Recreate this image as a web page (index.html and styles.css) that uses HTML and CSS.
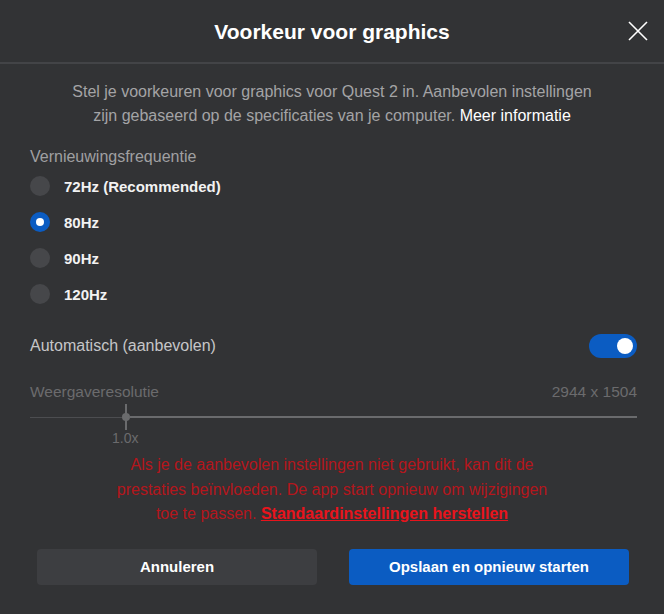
FILE: index.html
```html
<!DOCTYPE html>
<html lang="nl">
<head>
<meta charset="utf-8">
<title>Voorkeur voor graphics</title>
<link rel="stylesheet" href="styles.css">
</head>
<body>
<div class="dialog">
  <header class="header">
    <span class="spacer"></span>
    <h1 class="title">Voorkeur voor graphics</h1>
    <button class="close" aria-label="Sluiten">
      <svg width="20" height="20" viewBox="0 0 20 20"><path d="M1 1 L19 19 M19 1 L1 19" stroke="#ffffff" stroke-width="1.6" fill="none"/></svg>
    </button>
  </header>

  <p class="intro">Stel je voorkeuren voor graphics voor Quest 2 in. Aanbevolen instellingen<br>zijn gebaseerd op de specificaties van je computer. <a class="more">Meer informatie</a></p>

  <section class="section">
    <div class="label">Vernieuwingsfrequentie</div>
    <ul class="radios">
      <li class="radio"><span class="dot"></span><span class="rlabel">72Hz (Recommended)</span></li>
      <li class="radio"><span class="dot on"></span><span class="rlabel">80Hz</span></li>
      <li class="radio"><span class="dot"></span><span class="rlabel">90Hz</span></li>
      <li class="radio"><span class="dot"></span><span class="rlabel">120Hz</span></li>
    </ul>

    <div class="auto-row">
      <span class="auto-label">Automatisch (aanbevolen)</span>
      <span class="toggle"><span class="knob"></span></span>
    </div>

    <div class="res-row">
      <span>Weergaveresolutie</span>
      <span>2944 x 1504</span>
    </div>
    <div class="slider">
      <div class="track-left"></div>
      <div class="tick"></div>
      <div class="thumb"></div>
      <div class="track-right"></div>
    </div>
    <div class="scale"><span class="scale-val">1.0x</span></div>
  </section>

  <p class="warning">Als je de aanbevolen instellingen niet gebruikt, kan dit de<br>prestaties beïnvloeden. De app start opnieuw om wijzigingen<br>toe te passen. <a class="reset">Standaardinstellingen herstellen</a></p>

  <div class="actions">
    <button class="btn btn-secondary">Annuleren</button>
    <button class="btn btn-primary">Opslaan en opnieuw starten</button>
  </div>
</div>
</body>
</html>
```
FILE: styles.css
```css
* { box-sizing: border-box; }
html, body {
  margin: 0;
  padding: 0;
  background: #323335;
  width: 664px;
  height: 614px;
  overflow: hidden;
}
body {
  font-family: "Liberation Sans", Arial, sans-serif;
  color: #ffffff;
}
.dialog {
  display: flex;
  flex-direction: column;
  width: 664px;
}
.header {
  height: 64px;
  display: grid;
  grid-template-columns: 48px 1fr 48px;
  align-items: center;
  padding: 0 16px 0 16px;
  border-bottom: 2px solid #434447;
}
.title {
  margin: 0;
  text-align: center;
  font-size: 21px;
  font-weight: 600;
  color: #ffffff;
  padding-top: 2px;
}
.close {
  justify-self: end;
  background: none;
  border: 0;
  padding: 0;
  width: 20px;
  height: 20px;
  display: flex;
}
.intro {
  margin: 16px 0 0;
  text-align: center;
  font-size: 16px;
  line-height: 24px;
  color: #a4a4a6;
}
.more { color: #ffffff; }
.section {
  padding: 0 27px 0 30px;
  margin-top: 17px;
}
.label {
  font-size: 16px;
  line-height: 23px;
  color: #a0a0a2;
}
.radios {
  list-style: none;
  margin: 0;
  padding: 0;
}
.radio {
  height: 36px;
  display: flex;
  align-items: center;
  gap: 14px;
}
.dot {
  width: 20px;
  height: 20px;
  border-radius: 50%;
  background: #46474a;
  display: flex;
  align-items: center;
  justify-content: center;
}
.dot.on { background: #0b5cc2; }
.dot.on::after {
  content: "";
  width: 8px;
  height: 8px;
  border-radius: 50%;
  background: #ffffff;
}
.rlabel {
  font-size: 15px;
  font-weight: 700;
  color: #f2f2f2;
}
.auto-row {
  margin-top: 22px;
  height: 24px;
  display: flex;
  align-items: center;
  justify-content: space-between;
}
.auto-label {
  font-size: 16px;
  color: #c6c6c8;
}
.toggle {
  width: 48px;
  height: 24px;
  border-radius: 12px;
  background: #0b5cc2;
  display: flex;
  align-items: center;
  justify-content: flex-end;
  padding-right: 4px;
}
.knob {
  width: 16px;
  height: 16px;
  border-radius: 50%;
  background: #ffffff;
}
.res-row {
  margin-top: 22px;
  height: 24px;
  display: flex;
  align-items: center;
  justify-content: space-between;
  font-size: 15.5px;
  color: #6b6b6d;
}
.slider {
  height: 26px;
  display: flex;
  align-items: center;
  position: relative;
}
.track-left {
  width: 92px;
  height: 1px;
  background: #4c4d50;
}
.tick {
  position: absolute;
  left: 95px;
  top: 0;
  width: 2px;
  height: 26px;
  background: #6a6b6d;
}
.thumb {
  width: 8px;
  height: 8px;
  border-radius: 50%;
  background: #6a6b6d;
  flex: none;
}
.track-right {
  flex: 1;
  height: 2px;
  background: #6a6b6d;
}
.scale {
  height: 16px;
  font-size: 14px;
  line-height: 16px;
  color: #6b6b6d;
  padding-left: 82px;
}
.warning {
  margin: 7px 0 0;
  text-align: center;
  font-size: 16px;
  line-height: 24.5px;
  color: #b5161c;
}
.reset {
  color: #e8141c;
  font-weight: 700;
  text-decoration: underline;
}
.actions {
  margin-top: 22px;
  padding: 0 35px 0 37px;
  display: grid;
  grid-template-columns: 280px 280px;
  gap: 32px;
}
.btn {
  height: 36px;
  border: 0;
  border-radius: 4px;
  font-family: inherit;
  font-size: 15px;
  font-weight: 700;
  color: #ffffff;
}
.btn-secondary { background: #3d3e41; }
.btn-primary { background: #0b5cc2; }
```
